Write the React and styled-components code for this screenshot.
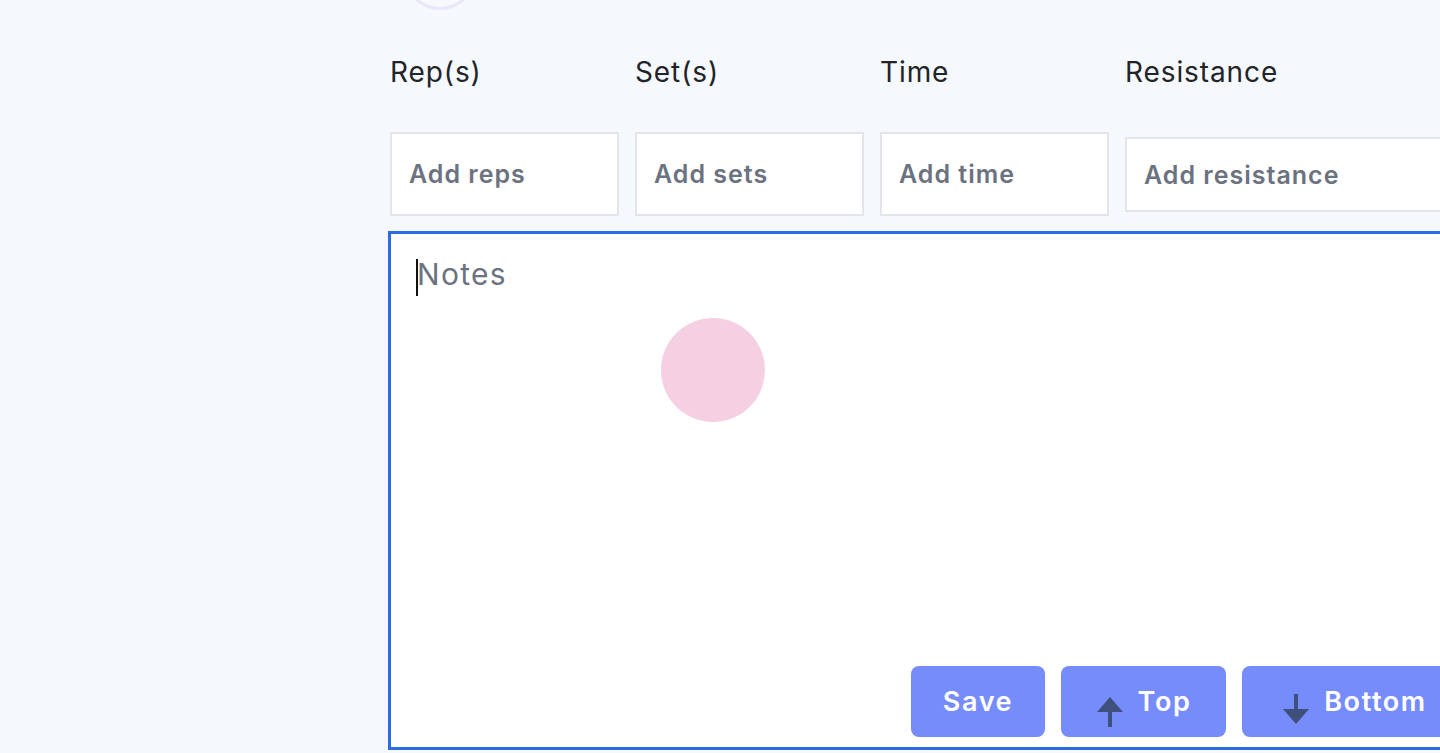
import React from 'react';
import styled, { createGlobalStyle } from 'styled-components';

const GlobalStyle = createGlobalStyle`
  html, body {
    margin: 0;
    padding: 0;
    background: #f5f8fd;
    overflow: hidden;
  }
  body {
    font-family: Inter, 'Noto Sans', sans-serif;
  }
`;

const Page = styled.div`
  width: 1440px;
  height: 753px;
  overflow: hidden;
  position: relative;
  padding-left: 388px;
  box-sizing: border-box;
`;

const AvatarRing = styled.div`
  width: 72px;
  height: 72px;
  margin: -62px 0 0 16px;
  border-radius: 50%;
  border: 3px solid #e8e6fb;
  box-sizing: border-box;
`;

const FieldGrid = styled.div`
  display: grid;
  grid-template-columns: repeat(3, 229px) 360px;
  column-gap: 16px;
  padding-left: 2px;
  margin-top: 44px;
`;

const Label = styled.div`
  font-size: 28px;
  line-height: 36px;
  letter-spacing: 0.9px;
  color: #222428;
  font-weight: 400;
`;

const Field = styled.input`
  margin-top: ${({ $offset }) => $offset || 42}px;
  height: ${({ $height }) => $height || 84}px;
  width: 100%;
  box-sizing: border-box;
  border: 2px solid #e2e5ea;
  background: #fff;
  padding: 0 0 0 17px;
  font-family: inherit;
  font-size: 25px;
  font-weight: 600;
  letter-spacing: 1px;
  outline: none;
  &::placeholder {
    color: #6b7280;
  }
`;

const NotesBox = styled.div`
  position: relative;
  margin-top: 15px;
  width: 1098px;
  height: 519px;
  box-sizing: border-box;
  border: 3px solid #2d6be4;
  background: #fff;
  display: flex;
  flex-direction: column;
  padding: 0 16px 10px 0;
`;

const NotesArea = styled.textarea`
  flex: 1;
  border: none;
  outline: none;
  resize: none;
  padding: 20px 0 0 26px;
  font-family: inherit;
  font-size: 30px;
  line-height: 40px;
  letter-spacing: 1.3px;
  background: transparent;
  &::placeholder {
    color: #6b7280;
  }
`;

const Caret = styled.span`
  position: absolute;
  left: 25px;
  top: 25px;
  width: 2px;
  height: 37px;
  background: #111;
`;

const ButtonRow = styled.div`
  display: flex;
  justify-content: flex-end;
  gap: 16px;
`;

const ActionButton = styled.button`
  height: 71px;
  width: ${({ $width }) => $width}px;
  border: none;
  border-radius: 8px;
  background: #778cfb;
  color: #fff;
  font-family: inherit;
  font-size: 27px;
  font-weight: 600;
  letter-spacing: 1.6px;
  display: flex;
  align-items: center;
  justify-content: center;
  gap: 14px;
  padding: 0;
`;

const ArrowIcon = styled.svg`
  width: 28px;
  height: 30px;
  margin-top: ${({ $down }) => ($down ? 14 : 20)}px;
`;

const TouchDot = styled.div`
  position: absolute;
  left: 661px;
  top: 318px;
  width: 104px;
  height: 104px;
  border-radius: 50%;
  background: #f5cfe2;
`;

const UpArrow = () => (
  <ArrowIcon viewBox="0 0 28 30">
    <polygon points="14,0 27,15 1,15" fill="#3e507c" />
    <rect x="12" y="15" width="4" height="15" fill="#3e507c" />
  </ArrowIcon>
);

const DownArrow = () => (
  <ArrowIcon viewBox="0 0 28 30" $down>
    <rect x="12" y="0" width="4" height="15" fill="#3e507c" />
    <polygon points="1,15 27,15 14,30" fill="#3e507c" />
  </ArrowIcon>
);

const fields = [
  { label: 'Rep(s)', placeholder: 'Add reps' },
  { label: 'Set(s)', placeholder: 'Add sets' },
  { label: 'Time', placeholder: 'Add time' },
  { label: 'Resistance', placeholder: 'Add resistance', offset: 47, height: 75 },
];

export default function App() {
  return (
    <>
      <GlobalStyle />
      <Page>
        <AvatarRing />
        <FieldGrid>
          {fields.map(({ label }) => (
            <Label key={label}>{label}</Label>
          ))}
          {fields.map(({ placeholder, offset, height }) => (
            <Field key={placeholder} placeholder={placeholder} $offset={offset} $height={height} />
          ))}
        </FieldGrid>
        <NotesBox>
          <NotesArea placeholder="Notes" />
          <Caret />
          <ButtonRow>
            <ActionButton $width={134}>Save</ActionButton>
            <ActionButton $width={165}>
              <UpArrow />
              Top
            </ActionButton>
            <ActionButton $width={225}>
              <DownArrow />
              Bottom
            </ActionButton>
          </ButtonRow>
        </NotesBox>
        <TouchDot />
      </Page>
    </>
  );
}
